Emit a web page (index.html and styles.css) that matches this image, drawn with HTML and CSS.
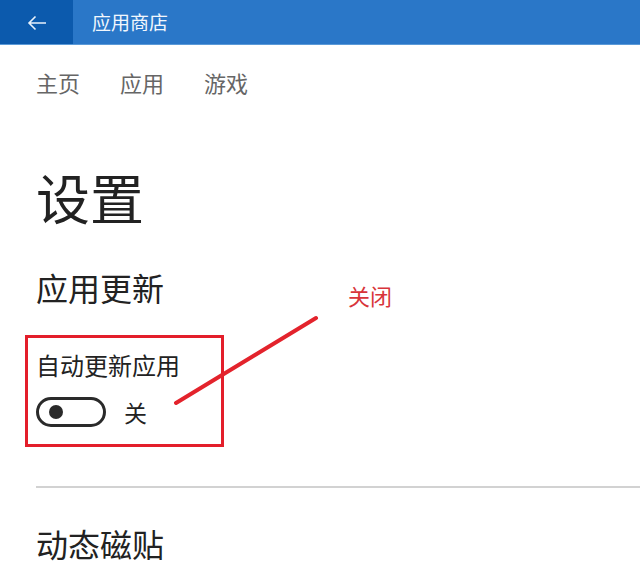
FILE: index.html
```html
<!DOCTYPE html>
<html lang="zh-CN">
<head>
<meta charset="utf-8">
<title>应用商店</title>
<link rel="stylesheet" href="styles.css">
</head>
<body>
<header class="titlebar">
  <div class="back">
    <svg width="20" height="16" viewBox="0 0 20 16" aria-hidden="true">
      <path d="M19 8H2M8.5 1.5L2 8l6.5 6.5" fill="none" stroke="#e8f1fb" stroke-width="1.6"/>
    </svg>
  </div>
  <div class="apptitle">应用商店</div>
</header>
<main class="page">
  <nav class="tabs">
    <span>主页</span>
    <span>应用</span>
    <span>游戏</span>
  </nav>
  <h1 class="heading">设置</h1>
  <h2 class="section">应用更新</h2>
  <div class="annotated">
    <div class="setting">
      <div class="setting-label">自动更新应用</div>
      <div class="toggle-row">
        <span class="toggle"><span class="knob"></span></span>
        <span class="toggle-state">关</span>
      </div>
    </div>
    <svg class="callout" width="240" height="120" viewBox="0 0 240 120" aria-hidden="true">
      <line x1="3" y1="97" x2="143" y2="12" stroke="#e3232c" stroke-width="4" stroke-linecap="round"/>
    </svg>
    <span class="callout-text">关闭</span>
  </div>
  <hr class="divider">
  <h2 class="section tiles">动态磁贴</h2>
</main>
</body>
</html>
```
FILE: styles.css
```css
* { box-sizing: border-box; }
html, body { margin: 0; padding: 0; background: #fff; }
body {
  font-family: "Noto Sans CJK SC", "Noto Sans", sans-serif;
  color: #222;
  width: 640px;
  height: 561px;
  overflow: hidden;
}
.titlebar {
  display: flex;
  height: 45px;
  background: #2a77c8;
  border-bottom: 1px solid #5b9ad8;
}
.back {
  width: 73px;
  background: #0c5aad;
  display: flex;
  align-items: center;
  justify-content: center;
  padding-top: 2px;
}
.apptitle {
  color: #f2f7fd;
  font-size: 19px;
  line-height: 44px;
  padding-left: 19px;
}
.page { padding-left: 36px; }
.tabs {
  display: flex;
  gap: 40px;
  margin-top: 22px;
  font-size: 22px;
  line-height: 30px;
  color: #666;
}
.heading {
  margin: 68px 0 0;
  font-size: 54px;
  line-height: 64px;
  font-weight: 400;
  color: #222;
}
.section {
  margin: 38px 0 0;
  font-size: 32px;
  line-height: 40px;
  font-weight: 400;
  color: #222;
}
.annotated {
  position: relative;
  margin: 28px 0 0 -11px;
}
.setting {
  width: 199px;
  height: 112px;
  border: 3px solid #e31e2a;
  padding: 12px 0 0 8px;
}
.setting-label {
  font-size: 24px;
  line-height: 30px;
  color: #222;
}
.toggle-row {
  display: flex;
  align-items: center;
  gap: 18px;
  margin-top: 17px;
}
.toggle {
  width: 70px;
  height: 30px;
  border: 3px solid #2a2a2a;
  border-radius: 15px;
  display: flex;
  align-items: center;
  padding-left: 10px;
}
.knob {
  width: 14px;
  height: 14px;
  border-radius: 50%;
  background: #2a2a2a;
}
.toggle-state {
  font-size: 23px;
  line-height: 30px;
  color: #222;
}
.callout {
  position: absolute;
  left: 148px;
  top: -29px;
}
.callout-text {
  position: absolute;
  left: 323px;
  top: -54px;
  font-size: 22px;
  line-height: 28px;
  color: #d8343a;
}
.divider {
  margin: 39px 0 0;
  border: 0;
  height: 2px;
  background: #d2d2d2;
}
.section.tiles { margin-top: 35px; }
```
